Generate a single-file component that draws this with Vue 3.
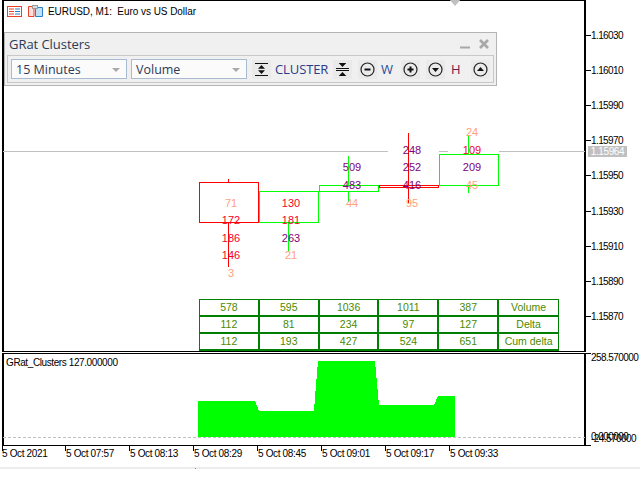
<script setup>
const priceTicks = [
  { y: 35, t: '1.16030' }, { y: 70, t: '1.16010' }, { y: 105, t: '1.15990' },
  { y: 140, t: '1.15970' }, { y: 175, t: '1.15950' }, { y: 211, t: '1.15930' },
  { y: 246, t: '1.15910' }, { y: 281, t: '1.15890' }, { y: 316, t: '1.15870' },
]
const timeTicks = [
  { x: 3, lx: 2, t: '5 Oct 2021' }, { x: 66, lx: 66, t: '5 Oct 07:57' },
  { x: 130, lx: 130, t: '5 Oct 08:13' }, { x: 194, lx: 194, t: '5 Oct 08:29' },
  { x: 258, lx: 258, t: '5 Oct 08:45' }, { x: 322, lx: 322, t: '5 Oct 09:01' },
  { x: 386, lx: 386, t: '5 Oct 09:17' }, { x: 450, lx: 450, t: '5 Oct 09:33' },
]
const boxes = [
  { x: 199, y: 182, w: 60, h: 41, c: '#f00' },
  { x: 259, y: 191, w: 60, h: 32, c: '#0f0' },
  { x: 319, y: 185, w: 60, h: 7, c: '#0f0' },
  { x: 379, y: 185, w: 60, h: 3, c: '#f00' },
  { x: 439, y: 154, w: 60, h: 32, c: '#0f0' },
]
const wicks = [
  { x: 228, y: 179, h: 88, c: '#f00' },
  { x: 288, y: 222, h: 30, c: '#0f0' },
  { x: 348, y: 156, h: 46, c: '#0f0' },
  { x: 408, y: 133, h: 70, c: '#f00' },
  { x: 468, y: 135, h: 58, c: '#0f0' },
]
const R = '#f5002a', P = '#800080', S = '#ffa07a'
const nums = [
  [231, 203, '71', S], [231, 220, '172', R], [231, 238, '186', R], [231, 255, '146', R], [231, 273, '3', S],
  [291, 203, '130', R], [291, 220, '181', R], [291, 238, '263', P], [291, 255, '21', S],
  [352, 167, '509', P], [352, 185, '483', P], [352, 203, '44', S],
  [412, 150, '248', P], [412, 167, '252', P], [412, 185, '416', P], [412, 203, '95', S],
  [472, 132, '24', S], [472, 150, '109', R], [472, 167, '209', P], [472, 185, '45', S],
].map(([x, y, t, c]) => ({ x, y, t, c }))
const table = [
  ['578', '595', '1036', '1011', '387', 'Volume'],
  ['112', '81', '234', '97', '127', 'Delta'],
  ['112', '193', '427', '524', '651', 'Cum delta'],
]
const bidSegments = [[3, 388], [439, 448], [499, 585]]
</script>

<template>
  <div class="screen">
    <!-- chart title -->
    <svg class="hdr-icon" width="46" height="14" viewBox="0 0 46 14">
      <rect x="7.500" y="1.500" width="14" height="10" fill="#fff" stroke="#e8402a" />
      <path d="M9 4h5M9 6.500h5M9 9h5" stroke="#e8402a" />
      <path d="M15 4h5M15 6.500h5M15 9h5" stroke="#2b7fc4" />
      <path d="M28.500 1.500h5.500v10h-5.500z" fill="#fde0dc" stroke="#e8402a" />
      <path d="M35.500 2.500h7v9h-7z" fill="#bfe0f5" stroke="#2b7fc4" />
      <rect x="32.500" y="0.500" width="5" height="3" fill="#ddd" stroke="#999" />
    </svg>
    <div class="chart-title">EURUSD, M1:&nbsp; Euro vs US Dollar</div>

    <!-- frames -->
    <div class="main-frame"></div>
    <div class="sub-frame"></div>
    <div class="mark-top"></div>

    <!-- bid line -->
    <div v-for="s in bidSegments" :key="s[0]" class="bid" :style="{ left: s[0] + 'px', width: s[1] - s[0] + 'px' }"></div>

    <!-- price scale -->
    <template v-for="p in priceTicks" :key="p.t">
      <div class="tick-h" :style="{ top: p.y + 'px' }"></div>
      <div class="axis-label" :style="{ top: p.y - 6 + 'px' }">{{ p.t }}</div>
    </template>
    <div class="bid-tag">1.15964</div>

    <!-- candles: wicks run behind the white candle bodies -->
    <div v-for="w in wicks" :key="w.x" class="wick" :style="{ left: w.x + 'px', top: w.y + 'px', height: w.h + 'px', background: w.c }"></div>
    <div v-for="b in boxes" :key="b.x" class="box" :style="{ left: b.x + 'px', top: b.y + 'px', width: b.w + 'px', height: b.h + 'px', borderColor: b.c }"></div>
    <div v-for="n in nums" :key="n.x + '-' + n.y" class="num" :style="{ left: n.x - 20 + 'px', top: n.y - 8 + 'px', color: n.c }">{{ n.t }}</div>

    <!-- stats table -->
    <div class="stats">
      <template v-for="(row, i) in table" :key="i">
        <div v-for="(c, j) in row" :key="j" class="cell">{{ c }}</div>
      </template>
    </div>

    <!-- indicator window -->
    <div class="sub-title">GRat_Clusters 127.000000</div>
    <svg class="area" width="640" height="480" viewBox="0 0 640 480">
      <line x1="3" y1="437.500" x2="585" y2="437.500" stroke="#c0c0c0" stroke-dasharray="3 2" />
      <polygon fill="#00ff00" shape-rendering="crispEdges"
        points="198,401 255,401 259,411 314,411 316,385 318,361 375,361 379,405 434,405 438,396 455,396 455,437 198,437" />
      <path d="M585 353.500h6M585 445.500h6" stroke="#000" />
    </svg>
    <div class="axis-label wide" :style="{ top: '351px' }">258.570000</div>
    <div class="axis-label wide" :style="{ top: '430px' }">0.000000</div>
    <div class="axis-label wide" :style="{ top: '432px' }">-24.570000</div>

    <!-- time scale -->
    <template v-for="t in timeTicks" :key="t.t">
      <div class="tick-v" :style="{ left: t.x - 1 + 'px' }"></div>
      <div class="time-label" :style="{ left: t.lx + 'px' }">{{ t.t }}</div>
    </template>
    <div class="strip"></div>
    <div class="strip-dot"></div>

    <!-- floating panel -->
    <section class="panel">
      <header class="panel-head">
        <span class="panel-title">GRat Clusters</span>
        <span class="win-btns">
          <svg width="10" height="10" viewBox="0 0 10 10"><path d="M0 8.500h10" stroke="#a8a8a8" stroke-width="2" /></svg>
          <svg width="10" height="10" viewBox="0 0 10 10"><path d="M1 1l8 8M9 1l-8 8" stroke="#a8a8a8" stroke-width="2.600" /></svg>
        </span>
      </header>
      <div class="panel-body">
        <div class="select"><span>15 Minutes</span><i></i></div>
        <div class="select second"><span>Volume</span><i></i></div>
        <button class="ico m5">
          <svg width="15" height="15" viewBox="0 0 15 15"><path d="M1 1.500h13M1 13.500h13" stroke="#111" /><path d="M7.500 3l3.500 3.800h-7zM7.500 12l3.500-3.800h-7z" fill="#111" /></svg>
        </button>
        <span class="label cluster">CLUSTER</span>
        <button class="ico m5">
          <svg width="15" height="15" viewBox="0 0 15 15"><path d="M1 6.500h13M1 8.500h13" stroke="#111" /><path d="M7.500 5l-3.800-4h7.600zM7.500 10l-3.800 4h7.600z" fill="#111" /></svg>
        </button>
        <button class="ico m6"><svg width="15" height="15" viewBox="0 0 15 15"><circle cx="7.500" cy="7.500" r="6.500" fill="none" stroke="#222" stroke-width="1.200" /><path d="M4.500 7.500h6" stroke="#111" stroke-width="2" /></svg></button>
        <span class="label w">W</span>
        <button class="ico m8"><svg width="15" height="15" viewBox="0 0 15 15"><circle cx="7.500" cy="7.500" r="6.500" fill="none" stroke="#222" stroke-width="1.200" /><path d="M4.500 7.500h6M7.500 4.500v6" stroke="#111" stroke-width="2" /></svg></button>
        <button class="ico m6"><svg width="15" height="15" viewBox="0 0 15 15"><circle cx="7.500" cy="7.500" r="6.500" fill="none" stroke="#222" stroke-width="1.200" /><path d="M4 6h7l-3.500 4z" fill="#111" /></svg></button>
        <span class="label h">H</span>
        <button class="ico m11"><svg width="15" height="15" viewBox="0 0 15 15"><circle cx="7.500" cy="7.500" r="6.500" fill="none" stroke="#222" stroke-width="1.200" /><path d="M4 9h7l-3.500-4z" fill="#111" /></svg></button>
      </div>
    </section>
  </div>
</template>

<style scoped>
.screen {
  position: relative;
  width: 640px;
  height: 480px;
  background: #fff;
  overflow: hidden;
  font-family: "Liberation Sans", Arial, sans-serif;
}
.hdr-icon { position: absolute; left: 0; top: 5px; }
.chart-title {
  position: absolute; left: 48px; top: 4px;
  font: 10px/15px "Liberation Sans", Arial, sans-serif;
  letter-spacing: -0.05px;
  color: #000;
  white-space: nowrap;
}
.main-frame {
  position: absolute; left: 2px; top: 0; width: 584px; height: 352px;
  box-sizing: border-box;
  border: 1px solid #000; border-left-width: 2px; border-right-width: 2px;
}
.sub-frame {
  position: absolute; left: 2px; top: 353px; width: 584px; height: 93px;
  box-sizing: border-box;
  border: 1px solid #000; border-left-width: 2px; border-right-width: 2px;
}
.mark-top {
  position: absolute; left: 449px; top: -1px; width: 0; height: 0;
  border-left: 6px solid transparent; border-right: 6px solid transparent;
  border-top: 7px solid #c0c0c0;
}
.bid { position: absolute; top: 151px; height: 1px; background: #c0c0c0; }
.tick-h { position: absolute; left: 586px; width: 5px; height: 1px; background: #000; }
.axis-label {
  position: absolute; left: 591px;
  font-size: 10px; line-height: 14px; letter-spacing: -0.6px;
  color: #000; white-space: nowrap;
}
.axis-label.wide { letter-spacing: -0.55px; }
.bid-tag {
  position: absolute; left: 588px; top: 146px; width: 39px; height: 11px;
  background: #c0c0c0; color: #fff;
  font-size: 10px; line-height: 11px; letter-spacing: -0.4px; text-align: center;
}
.box { position: absolute; box-sizing: border-box; border: 1px solid; background: #fff; }
.wick { position: absolute; width: 1px; }
.num {
  position: absolute; width: 40px; text-align: center;
  font-size: 11px; line-height: 16px;
}
.stats {
  position: absolute; left: 199px; top: 299px; width: 360px;
  display: grid; grid-template-columns: repeat(6, 1fr);
  border-top: 1px solid #008000; border-left: 1px solid #008000;
  box-sizing: border-box; height: 52px;
  grid-auto-rows: 17px;
}
.cell {
  box-sizing: border-box;
  border-right: 2px solid #008000; border-bottom: 2px solid #008000;
  font-size: 10.500px; line-height: 15px; text-align: center;
  color: #4a8a00;
  white-space: nowrap;
}
.cell:nth-child(6n) { border-right-width: 1px; }
.sub-title {
  position: absolute; left: 6px; top: 355px;
  font: 10px/15px "Liberation Sans", Arial, sans-serif;
  letter-spacing: -0.4px;
  color: #000; white-space: nowrap;
}
.area { position: absolute; left: 0; top: 0; }
.tick-v { position: absolute; top: 446px; width: 1px; height: 5px; background: #000; }
.time-label {
  position: absolute; top: 447px;
  font-size: 10px; line-height: 14px; letter-spacing: -0.35px;
  color: #000; white-space: nowrap;
}
.strip {
  position: absolute; left: 0; right: 0; top: 467px; height: 2px; background: #ececec;
}
.strip-dot { position: absolute; left: 195px; top: 468px; width: 1px; height: 1px; background: #888; }
.panel {
  position: absolute; left: 4px; top: 32px; width: 493px; height: 54px;
  box-sizing: border-box;
  background: #f0f0f0; border: 1px solid #b4b4b4;
  display: flex; flex-direction: column;
  padding: 0 2px 2px;
}
.panel-head {
  flex: 1;
  display: flex; align-items: center; justify-content: space-between;
  padding: 0 5px 0 2px;
}
.panel-title {
  font: 13px/16px "Open Sans", sans-serif;
  letter-spacing: -0.05px;
  color: #2b3a55;
}
.win-btns { display: flex; gap: 9px; }
.panel-body {
  height: 28px; box-sizing: border-box;
  border: 1px solid #c8c8c8;
  display: flex; align-items: center;
  padding-left: 3px;
  color: #2b3a55;
}
.select {
  box-sizing: border-box;
  flex: none;
  width: 116px; height: 20px;
  background: #fbfbfb; border: 1px solid #a9bbd0;
  display: flex; align-items: center; justify-content: space-between;
  padding: 1px 6px 0 4px;
  font: 12.500px/18px "Open Sans", sans-serif;
  color: #2b3a55;
}
.select.second { margin-left: 4px; }
.select i {
  width: 0; height: 0;
  border-left: 4px solid transparent; border-right: 4px solid transparent;
  border-top: 4px solid #aaa;
}
.ico {
  flex: none;
  border: 0; padding: 2px;
  background: #eaeaea;
  width: 19px; height: 19px;
  display: flex; align-items: center; justify-content: center;
  box-sizing: border-box;
}
.m5 { margin: 0 0 0 5px; }
.m6 { margin: 0 0 0 6px; }
.m8 { margin: 0 0 0 8px; }
.m11 { margin: 0 0 0 11px; }
.label { flex: none; font: 13px/18px "Open Sans", sans-serif; color: #2b3a8a; text-align: center; white-space: nowrap; }
.cluster { width: 53px; margin-left: 4px; letter-spacing: -0.1px; }
.w { width: 12px; margin-left: 4px; color: #2b4a9a; }
.h { width: 9px; margin-left: 6px; color: #6b1a4a; }
</style>

<style>
html, body { margin: 0; padding: 0; background: #fff; }
</style>
